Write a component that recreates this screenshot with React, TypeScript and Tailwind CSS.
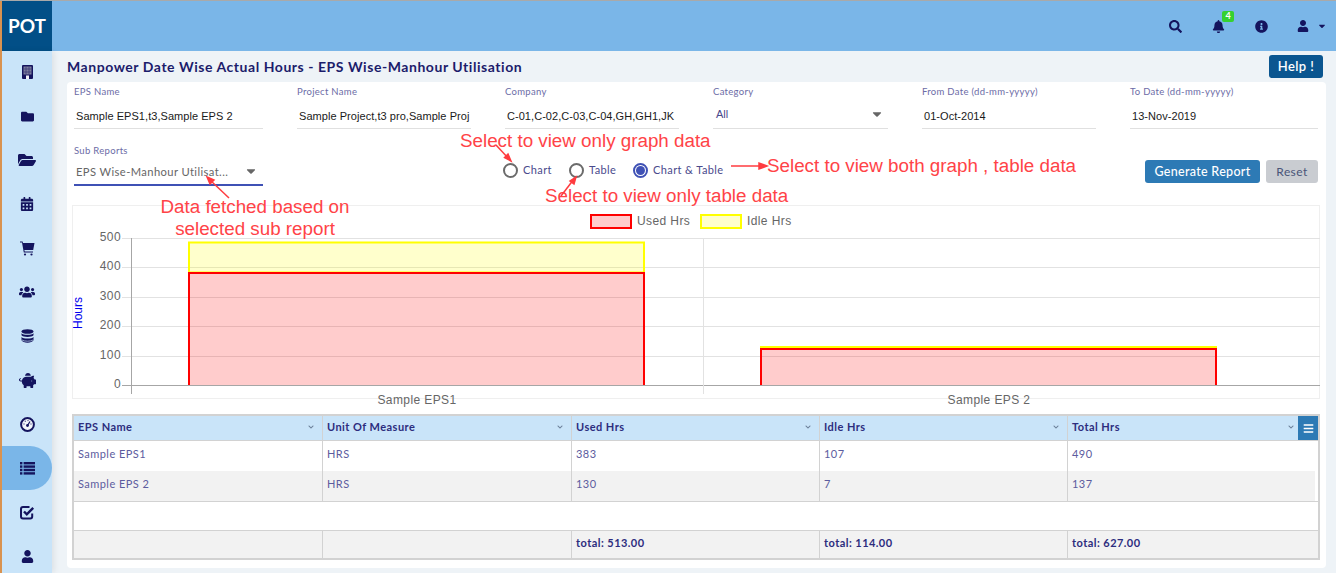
import {
  FaBars,
  FaBell,
  FaCalendarAlt,
  FaCaretDown,
  FaChevronDown,
  FaFolder,
  FaFolderOpen,
  FaInfoCircle,
  FaPiggyBank,
  FaSearch,
  FaUser,
  FaUsers,
} from "react-icons/fa";

const lato = "font-['Lato',sans-serif]";
const arial = "font-['Liberation_Sans',Arial,sans-serif]";

const BuildingIcon = () => (
  <svg width="11" height="14" viewBox="0 0 11 14">
    <rect width="11" height="14" rx="1" fill="#14145e" />
    <rect x="1.5" y="1.5" width="8" height="8" fill="#7d7d9c" />
    <path d="M4 1.5V9.5M7 1.5V9.5M1.5 4H9.5M1.5 7H9.5" stroke="#3c3c78" strokeWidth="0.8" />
    <rect x="4" y="10.5" width="3" height="3.5" fill="#f4f4f8" />
  </svg>
);

const CartIcon = () => (
  <svg width="15" height="15" viewBox="0 0 15 15" fill="#14145e">
    <path d="M0 0.5H2.6L3 2H14.5L13.2 9H4.4L4.7 10.5H13V11.5H3.8L2 1.5H0Z" />
    <circle cx="5" cy="13.5" r="1.1" />
    <circle cx="11.5" cy="13.5" r="1.1" />
  </svg>
);

const DatabaseIcon = () => (
  <svg width="13" height="14" viewBox="0 0 13 14" fill="#14145e">
    <ellipse cx="6.5" cy="2.5" rx="6" ry="2.3" />
    <path d="M0.5 4.2C2 6.2 11 6.2 12.5 4.2V6.3C11 8.6 2 8.6 0.5 6.3Z" />
    <path d="M0.5 8C2 10 11 10 12.5 8V11.3C11 14.5 2 14.5 0.5 11.3Z" />
    <path d="M1 11C3 12.6 10 12.6 12 11" stroke="#c9e4f9" strokeWidth="0.7" fill="none" />
  </svg>
);

const GaugeIcon = () => (
  <svg width="15" height="15" viewBox="0 0 15 15">
    <circle cx="7.5" cy="7.5" r="6.4" fill="#f3f6fa" stroke="#14145e" strokeWidth="2" />
    <path d="M7.5 8.5L10 4.5" stroke="#14145e" strokeWidth="1.3" />
    <circle cx="7.5" cy="8.5" r="1.4" fill="#14145e" />
    <g fill="#5a5a90">
      <circle cx="4" cy="7" r="0.7" />
      <circle cx="5.3" cy="4.3" r="0.7" />
      <circle cx="8" cy="3.5" r="0.7" />
      <circle cx="11" cy="7" r="0.7" />
    </g>
  </svg>
);

const ListIcon = () => (
  <svg width="15" height="13" viewBox="0 0 15 13" fill="#14145e">
    {[0, 3.4, 6.8, 10.2].map((y) => (
      <g key={y}>
        <rect x="0" y={y} width="2.4" height="2.4" />
        <rect x="3.6" y={y} width="11.4" height="2.4" />
      </g>
    ))}
  </svg>
);

const CheckIcon = () => (
  <svg width="15" height="15" viewBox="0 0 15 15" fill="none" stroke="#14145e">
    <path d="M12.2 8.5V11.5A2 2 0 0 1 10.2 13.5H3A2 2 0 0 1 1 11.5V4A2 2 0 0 1 3 2H9.5" strokeWidth="2" />
    <path d="M4 6.5L6.8 9.3L13.2 2.8" strokeWidth="2.4" />
  </svg>
);

const sideItems = [
  <BuildingIcon key="a" />,
  <FaFolder key="b" size={13} />,
  <FaFolderOpen key="c" size={18} />,
  <FaCalendarAlt key="d" size={14} />,
  <CartIcon key="e" />,
  <FaUsers key="f" size={16} />,
  <DatabaseIcon key="g" />,
  <FaPiggyBank key="h" size={17} />,
  <GaugeIcon key="i" />,
  <ListIcon key="j" />,
  <CheckIcon key="k" />,
  <FaUser key="l" size={13} />,
];

const fields = [
  { label: "EPS Name", value: "Sample EPS1,t3,Sample EPS 2" },
  { label: "Project Name", value: "Sample Project,t3 pro,Sample Proj" },
  { label: "Company", value: "C-01,C-02,C-03,C-04,GH,GH1,JK" },
  { label: "Category", value: "All", select: true },
  { label: "From Date (dd-mm-yyyyy)", value: "01-Oct-2014" },
  { label: "To Date (dd-mm-yyyyy)", value: "13-Nov-2019" },
];

const columns = ["EPS Name", "Unit Of Measure", "Used Hrs", "Idle Hrs", "Total Hrs"];
const rows = [
  ["Sample EPS1", "HRS", "383", "107", "490"],
  ["Sample EPS 2", "HRS", "130", "7", "137"],
];
const totals = ["", "", "total: 513.00", "total: 114.00", "total: 627.00"];
const gridCols = "grid grid-cols-[249px_249px_248px_248px_1fr]";

function Chart() {
  const gridY = [238, 267, 297, 326, 356, 385];
  const labels = ["500", "400", "300", "200", "100", "0"];
  return (
    <svg viewBox="72 205 1248 205" width={1248} height={205} className="block">
      <rect x="72.5" y="205.5" width="1247" height="193" fill="#fff" stroke="#efefef" />
      <rect x="591" y="215" width="40" height="13" fill="#ffcccc" stroke="#ff0000" strokeWidth="2" />
      <text x="637" y="225" fontSize="12" fill="#666" letterSpacing="0.4" fontFamily="Liberation Sans">Used Hrs</text>
      <rect x="701" y="215" width="40" height="13" fill="#ffffcc" stroke="#ffff00" strokeWidth="2" />
      <text x="747" y="225" fontSize="12" fill="#666" letterSpacing="0.4" fontFamily="Liberation Sans">Idle Hrs</text>

      {gridY.map((y, i) => (
        <g key={y}>
          <line x1="122" x2="1320" y1={y + 0.5} y2={y + 0.5} stroke={i === 5 ? "#a6a6a6" : "#e2e2e2"} />
          <text x="121" y={y + 3} textAnchor="end" fontSize="12" fill="#666" letterSpacing="0.4" fontFamily="Liberation Sans">
            {labels[i]}
          </text>
        </g>
      ))}
      <line x1="131.5" x2="131.5" y1="238" y2="394" stroke="#a6a6a6" />
      <line x1="703.5" x2="703.5" y1="238" y2="394" stroke="#e2e2e2" />
      <text
        transform="translate(82 313) rotate(-90)"
        textAnchor="middle"
        fontSize="12"
        fill="#0000ee"
        fontFamily="Liberation Sans"
      >
        Hours
      </text>

      <rect x="189" y="242.5" width="455" height="30" fill="rgba(255,255,0,0.2)" stroke="#ffff00" strokeWidth="2" />
      <path d="M189 385V273H644V385" fill="rgba(255,0,0,0.2)" stroke="#ff0000" strokeWidth="2" />
      <rect x="761" y="347" width="455" height="2" fill="rgba(255,255,0,0.2)" stroke="#ffff00" strokeWidth="2" />
      <path d="M761 385V349H1216V385" fill="rgba(255,0,0,0.2)" stroke="#ff0000" strokeWidth="2" />

      <text x="417" y="404" textAnchor="middle" fontSize="12" fill="#666" letterSpacing="0.4" fontFamily="Liberation Sans">Sample EPS1</text>
      <text x="989" y="404" textAnchor="middle" fontSize="12" fill="#666" letterSpacing="0.4" fontFamily="Liberation Sans">Sample EPS 2</text>
    </svg>
  );
}

function Radio({ label, checked, className }: { label: string; checked?: boolean; className: string }) {
  return (
    <div className={`flex items-center ${className}`}>
      <span
        className={`flex h-[15px] w-[15px] items-center justify-center rounded-full border-2 ${
          checked ? "border-[#3f51b5]" : "border-[#6b6b6b]"
        }`}
      >
        {checked && <span className="h-[9px] w-[9px] rounded-full bg-[#3f51b5]" />}
      </span>
      <span className="ml-[5px] text-[11px] tracking-[0.4px] text-[#4a4a8c]">{label}</span>
    </div>
  );
}

export default function App() {
  return (
    <div className={`flex h-[573px] w-[1336px] flex-col overflow-hidden border-t border-[#a9a9a9] bg-[#eef3f7] ${lato}`}>
      <div className="flex h-[50px] shrink-0 border-l-2 border-[#d9924f] bg-[#7ab6e8]">
        <div className="flex w-[50px] items-center justify-center bg-[#024f87] text-[19px] font-bold text-white">POT</div>
        <div className="flex flex-1 items-center justify-end text-[#14145e]">
          <FaSearch size={13} className="mr-[30px]" />
          <div className="relative mr-[30px]">
            <FaBell size={13} />
            <span className="absolute -top-[9px] left-[10px] flex h-[11px] w-[12px] items-center justify-center rounded-[2px] bg-[#35d12f] text-[9px] font-bold text-white">
              4
            </span>
          </div>
          <FaInfoCircle size={13} className="mr-[29px]" />
          <FaUser size={12} className="mr-[8px]" />
          <FaCaretDown size={10} className="mr-[9px]" />
        </div>
      </div>

      <div className="flex min-h-0 flex-1">
        <div className="w-[52px] shrink-0 border-l-2 border-[#d9924f] bg-[#c9e4f9] shadow-[2px_0_6px_rgba(0,0,0,0.08)]">
          <div className="-mt-[1px]">
            {sideItems.map((icon, i) => (
              <div
                key={i}
                className={`flex h-[44px] items-center justify-center text-[#14145e] ${
                  i === 9 ? "rounded-r-full bg-[#7ab6e8]" : ""
                }`}
              >
                {icon}
              </div>
            ))}
          </div>
        </div>

        <div className="min-w-0 flex-1 pl-[15px] pr-[10px]">
          <div className="flex h-[31px] items-center justify-between">
            <h1 className="text-[14px] font-bold tracking-[0.55px] text-[#1c1c6b]">
              Manpower Date Wise Actual Hours - EPS Wise-Manhour Utilisation
            </h1>
            <button className="mr-[3px] h-[23px] w-[54px] rounded-[3px] bg-[#0b5690] text-[13px] font-semibold tracking-[0.4px] text-white">
              Help !
            </button>
          </div>

          <div className="h-[486px] rounded-[4px] bg-white pl-[5px] pr-[6px]">
            <div className="grid grid-cols-[189px_174px_174px_175px_174px_188px] gap-x-[34px] pl-[2px]">
              {fields.map((f) => (
                <div key={f.label} className="h-[47px] border-b border-[#e0e0e0]">
                  <div className="flex h-[20px] items-center text-[9.5px] tracking-[0.3px] text-[#6c6ca6]">{f.label}</div>
                  <div className={`flex h-[26px] items-center justify-between overflow-hidden whitespace-nowrap pl-[2px] ${arial} text-[11px] ${f.select ? "text-[#4a4a8c]" : "text-[#1a1a1a]"}`}>
                    <span className={f.select ? "pb-[1px] pl-[1px]" : "pt-[2px] tracking-[0.05px]"}>{f.value}</span>
                    {f.select && <FaCaretDown size={14} className="mb-[3px] mr-[4px] text-[#666]" />}
                  </div>
                </div>
              ))}
            </div>

            <div className="flex h-[76px] pl-[2px]">
              <div className="h-[57px] w-[189px] shrink-0">
                <div className="flex h-[30px] items-end pb-[1px] text-[9.5px] tracking-[0.3px] text-[#6c6ca6]">Sub Reports</div>
                <div className="flex h-[27px] items-center justify-between border-b-2 border-[#3f51b5] pl-[2px] pt-[2px] text-[11.2px] tracking-[0.4px] text-[#666]">
                  <span>EPS Wise-Manhour Utilisat...</span>
                  <FaCaretDown size={14} className="mb-[3px] mr-[5px]" />
                </div>
              </div>
              <div className="flex flex-1 items-start pt-[33px]">
                <Radio label="Chart" className="ml-[240px] w-[66px]" />
                <Radio label="Table" className="w-[64px]" />
                <Radio label="Chart &amp; Table" checked className="" />
                <div className="ml-auto mr-[2px] mt-[-2px] flex gap-[6px]">
                  <button className="h-[23px] w-[115px] rounded-[3px] bg-[#2d7ab5] pt-[1px] text-[12.5px] font-medium tracking-[0.3px] text-white">
                    Generate Report
                  </button>
                  <button className="h-[23px] w-[52px] rounded-[3px] bg-[#c9ccd1] pt-[1px] text-[12px] tracking-[0.4px] text-[#4a5578]">
                    Reset
                  </button>
                </div>
              </div>
            </div>

            <Chart />

            <div className="mt-[4px] border-2 border-[#d2d2d2] text-[11px] tracking-[0.45px]">
              <div className={`relative h-[24px] ${gridCols} bg-[#c9e4f9] font-bold text-[#2d2d7e]`}>
                {columns.map((c) => (
                  <div key={c} className="relative flex items-center border-r border-[#d2d2d2] pb-[2px] pl-[4px] last:border-r-0">
                    {c}
                    <FaChevronDown size={6} className={`absolute top-[8px] text-[#6b7f99] ${c === "Total Hrs" ? "right-[23px]" : "right-[8px]"}`} />
                  </div>
                ))}
                <div className="absolute right-0 top-0 flex h-[24px] w-[20px] items-center justify-center bg-[#2d7ab5] text-white">
                  <FaBars size={11} />
                </div>
              </div>
              <div className="border-t border-[#d2d2d2] pr-[3px] text-[#5c5c9e]">
                {rows.map((r, i) => (
                  <div key={r[0]} className={`h-[30px] ${gridCols} ${i === 1 ? "bg-[#f2f2f2]" : "bg-white"}`}>
                    {r.map((v, j) => (
                      <div key={j} className="border-r border-[#d2d2d2] pl-[4px] pt-[5px] last:border-r-0">
                        {v}
                      </div>
                    ))}
                  </div>
                ))}
              </div>
              <div className="h-[29px] border-t border-[#d2d2d2] bg-white" />
              <div className={`h-[28px] ${gridCols} border-t border-[#d2d2d2] bg-[#f2f2f2] font-bold text-[#2d2d7e]`}>
                {totals.map((v, j) => (
                  <div key={j} className="border-r border-[#d2d2d2] pl-[4px] pt-[4px] last:border-r-0">
                    {v}
                  </div>
                ))}
              </div>
            </div>
          </div>
        </div>
      </div>

      {/* annotations drawn on top of the screenshot */}
      <div className={`text-[18.8px] leading-[22px] text-[#ff4347] ${arial}`}>
        <span className="absolute left-[460px] top-[130px] whitespace-nowrap">Select to view only graph data</span>
        <span className="absolute left-[545px] top-[185px] whitespace-nowrap">Select to view only table data</span>
        <span className="absolute left-[767px] top-[155px] whitespace-nowrap">Select to view both graph , table data</span>
        <span className="absolute left-[140px] top-[196px] w-[230px] text-center">
          Data fetched based on
          <br />
          selected sub report
        </span>
        <svg className="pointer-events-none absolute left-0 top-0" width={1336} height={573}>
          <g stroke="#ff3b3f" strokeWidth="1.5" fill="#ff3b3f">
            <line x1="496" y1="145" x2="509" y2="159" />
            <path d="M511 161L504.5 157.5L508 154Z" />
            <line x1="561" y1="196" x2="574" y2="179" />
            <path d="M576 177L574 184L570 181Z" />
            <line x1="731" y1="166" x2="760" y2="166" />
            <path d="M767 166L759 163V169Z" />
            <line x1="229" y1="198" x2="210" y2="180" />
            <path d="M207 177L214 180L210 184Z" />
          </g>
        </svg>
      </div>
    </div>
  );
}
